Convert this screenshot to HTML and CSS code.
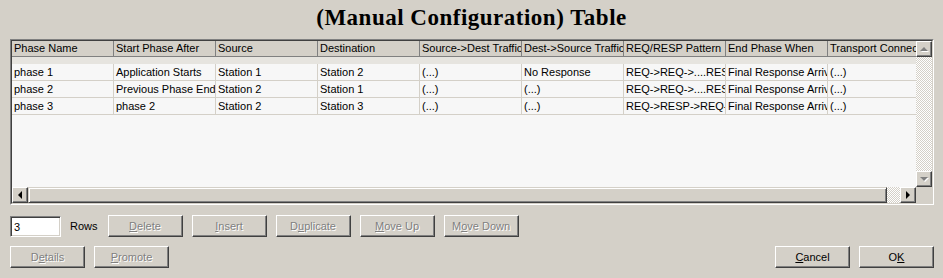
FILE: index.html
```html
<!DOCTYPE html>
<html lang="en">
<head>
  <meta charset="UTF-8">
  <title>(Manual Configuration) Table</title>
  <link rel="stylesheet" href="styles.css">
</head>
<body>
  <h1 class="title">(Manual Configuration) Table</h1>

  <div class="frame">
    <div class="frame-inner">
      <div class="table-area">
        <div class="row head">
          <div class="cell">Phase Name</div>
          <div class="cell">Start Phase After</div>
          <div class="cell">Source</div>
          <div class="cell">Destination</div>
          <div class="cell">Source-&gt;Dest Traffic</div>
          <div class="cell">Dest-&gt;Source Traffic</div>
          <div class="cell">REQ/RESP Pattern</div>
          <div class="cell">End Phase When</div>
          <div class="cell">Transport Connection</div>
        </div>
        <div class="blank"></div>
        <div class="row">
          <div class="cell">phase 1</div>
          <div class="cell">Application Starts</div>
          <div class="cell">Station 1</div>
          <div class="cell">Station 2</div>
          <div class="cell">(...)</div>
          <div class="cell">No Response</div>
          <div class="cell">REQ-&gt;REQ-&gt;....RESP</div>
          <div class="cell">Final Response Arrives</div>
          <div class="cell">(...)</div>
        </div>
        <div class="row">
          <div class="cell">phase 2</div>
          <div class="cell">Previous Phase Ends</div>
          <div class="cell">Station 2</div>
          <div class="cell">Station 1</div>
          <div class="cell">(...)</div>
          <div class="cell">(...)</div>
          <div class="cell">REQ-&gt;REQ-&gt;....RESP</div>
          <div class="cell">Final Response Arrives</div>
          <div class="cell">(...)</div>
        </div>
        <div class="row">
          <div class="cell">phase 3</div>
          <div class="cell">phase 2</div>
          <div class="cell">Station 2</div>
          <div class="cell">Station 3</div>
          <div class="cell">(...)</div>
          <div class="cell">(...)</div>
          <div class="cell">REQ-&gt;RESP-&gt;REQ-&gt;RESP</div>
          <div class="cell">Final Response Arrives</div>
          <div class="cell">(...)</div>
        </div>
      </div>

      <div class="vscroll">
        <div class="sbtn"><span class="arr up off"></span></div>
        <div class="track"></div>
        <div class="sbtn"><span class="arr down off"></span></div>
      </div>

      <div class="hscroll">
        <div class="sbtn"><span class="arr left"></span></div>
        <div class="thumb"></div>
        <div class="track"></div>
        <div class="sbtn"><span class="arr right"></span></div>
      </div>

      <div class="corner"></div>
    </div>
  </div>

  <div class="controls">
    <div class="ctl-row">
      <input class="rows-input" value="3">
      <span class="rows-label">Rows</span>
      <button class="btn" disabled><u>D</u>elete</button>
      <button class="btn" disabled><u>I</u>nsert</button>
      <button class="btn" disabled>D<u>u</u>plicate</button>
      <button class="btn" disabled><u>M</u>ove Up</button>
      <button class="btn" disabled>M<u>o</u>ve Down</button>
    </div>
    <div class="ctl-row">
      <button class="btn" disabled>D<u>e</u>tails</button>
      <button class="btn" disabled><u>P</u>romote</button>
      <div class="fill"></div>
      <button class="btn"><u>C</u>ancel</button>
      <button class="btn">O<u>K</u></button>
    </div>
  </div>
</body>
</html>
```

FILE: styles.css
```css
body {
  margin: 0;
  background: #d4d0c8;
  font-family: 'Liberation Sans', Arial, sans-serif;
  font-size: 11px;
  color: #000;
}

.title {
  margin: 0;
  padding-bottom: 4px;
  line-height: 35px;
  text-align: center;
  font-family: 'Liberation Serif', 'Times New Roman', serif;
  font-size: 23px;
  font-weight: bold;
  letter-spacing: 0.5px;
}

/* sunken list frame */
.frame {
  width: 922px;
  margin-left: 10px;
  border: 1px solid;
  border-color: #808080 #fff #fff #808080;
}

.frame-inner {
  display: grid;
  grid-template-columns: 904px 16px;
  grid-template-rows: 146px 16px;
  border: 1px solid;
  border-color: #404040 #d4d0c8 #d4d0c8 #404040;
}

.table-area {
  background: #f7f7f7;
  overflow: hidden;
}

.row {
  display: grid;
  grid-template-columns: repeat(9, 102px);
  height: 17px;
  border-bottom: 1px solid #d4d0c8;
  box-sizing: border-box;
}

.cell {
  padding-left: 2px;
  line-height: 16px;
  white-space: nowrap;
  overflow: hidden;
  border-right: 1px solid #d4d0c8;
}

.row.head {
  height: 16px;
  background: #d4d0c8;
  border-bottom: 1px solid #808080;
}

.row.head .cell {
  line-height: 15px;
  border-right-color: #808080;
}

.blank {
  height: 7px;
  background: #e6e4df;
}

/* scrollbars */
.vscroll {
  display: flex;
  flex-direction: column;
}

.hscroll {
  display: flex;
}

.sbtn {
  width: 16px;
  height: 16px;
  box-sizing: border-box;
  flex: none;
  display: flex;
  align-items: center;
  justify-content: center;
  background: #d4d0c8;
  border: 1px solid;
  border-color: #fff #404040 #404040 #fff;
  box-shadow: inset -1px -1px #808080;
}

.track {
  flex: 1;
  background: repeating-conic-gradient(#d4d0c8 0 25%, #fff 0 50%) 0 0 / 2px 2px;
}

.thumb {
  width: 859px;
  flex: none;
  box-sizing: border-box;
  background: #d4d0c8;
  border: 1px solid;
  border-color: #d4d0c8 #404040 #404040 #d4d0c8;
  box-shadow: inset 1px 1px #fff, inset -1px -1px #808080;
}

.corner {
  background: #d4d0c8;
}

.arr {
  width: 0;
  height: 0;
  border-style: solid;
  border-color: transparent;
}

.arr.left {
  border-width: 4px 4px 4px 0;
  border-right-color: #000;
  margin-right: 1px;
}

.arr.right {
  border-width: 4px 0 4px 4px;
  border-left-color: #000;
}

.arr.up {
  border-width: 0 4px 4px 4px;
  border-bottom-color: #808080;
  filter: drop-shadow(1px 1px 0 #fff);
}

.arr.down {
  border-width: 4px 4px 0 4px;
  border-top-color: #808080;
  filter: drop-shadow(1px 1px 0 #fff);
}

/* buttons below the table */
.controls {
  margin-top: 10px;
  padding: 0 9px 0 10px;
}

.ctl-row {
  display: flex;
  align-items: flex-start;
  gap: 9px;
  margin-bottom: 9px;
}

.rows-input {
  width: 51px;
  height: 21px;
  margin-top: 1px;
  box-sizing: border-box;
  padding: 0 3px;
  font: inherit;
  background: #fff;
  border: 1px solid;
  border-color: #808080 #fff #fff #808080;
  box-shadow: inset 1px 1px #404040, inset -1px -1px #d4d0c8;
  outline: none;
}

.rows-label {
  line-height: 22px;
  margin-right: 1px;
}

.btn {
  width: 75px;
  height: 22px;
  padding: 0;
  font: inherit;
  color: #000;
  background: #d4d0c8;
  border: 1px solid;
  border-color: #fff #404040 #404040 #fff;
  box-shadow: inset -1px -1px #808080;
  cursor: pointer;
}

.btn:disabled {
  color: #808080;
  text-shadow: 1px 1px 0 #fff;
  cursor: default;
}

.fill {
  flex: 1;
}
```
